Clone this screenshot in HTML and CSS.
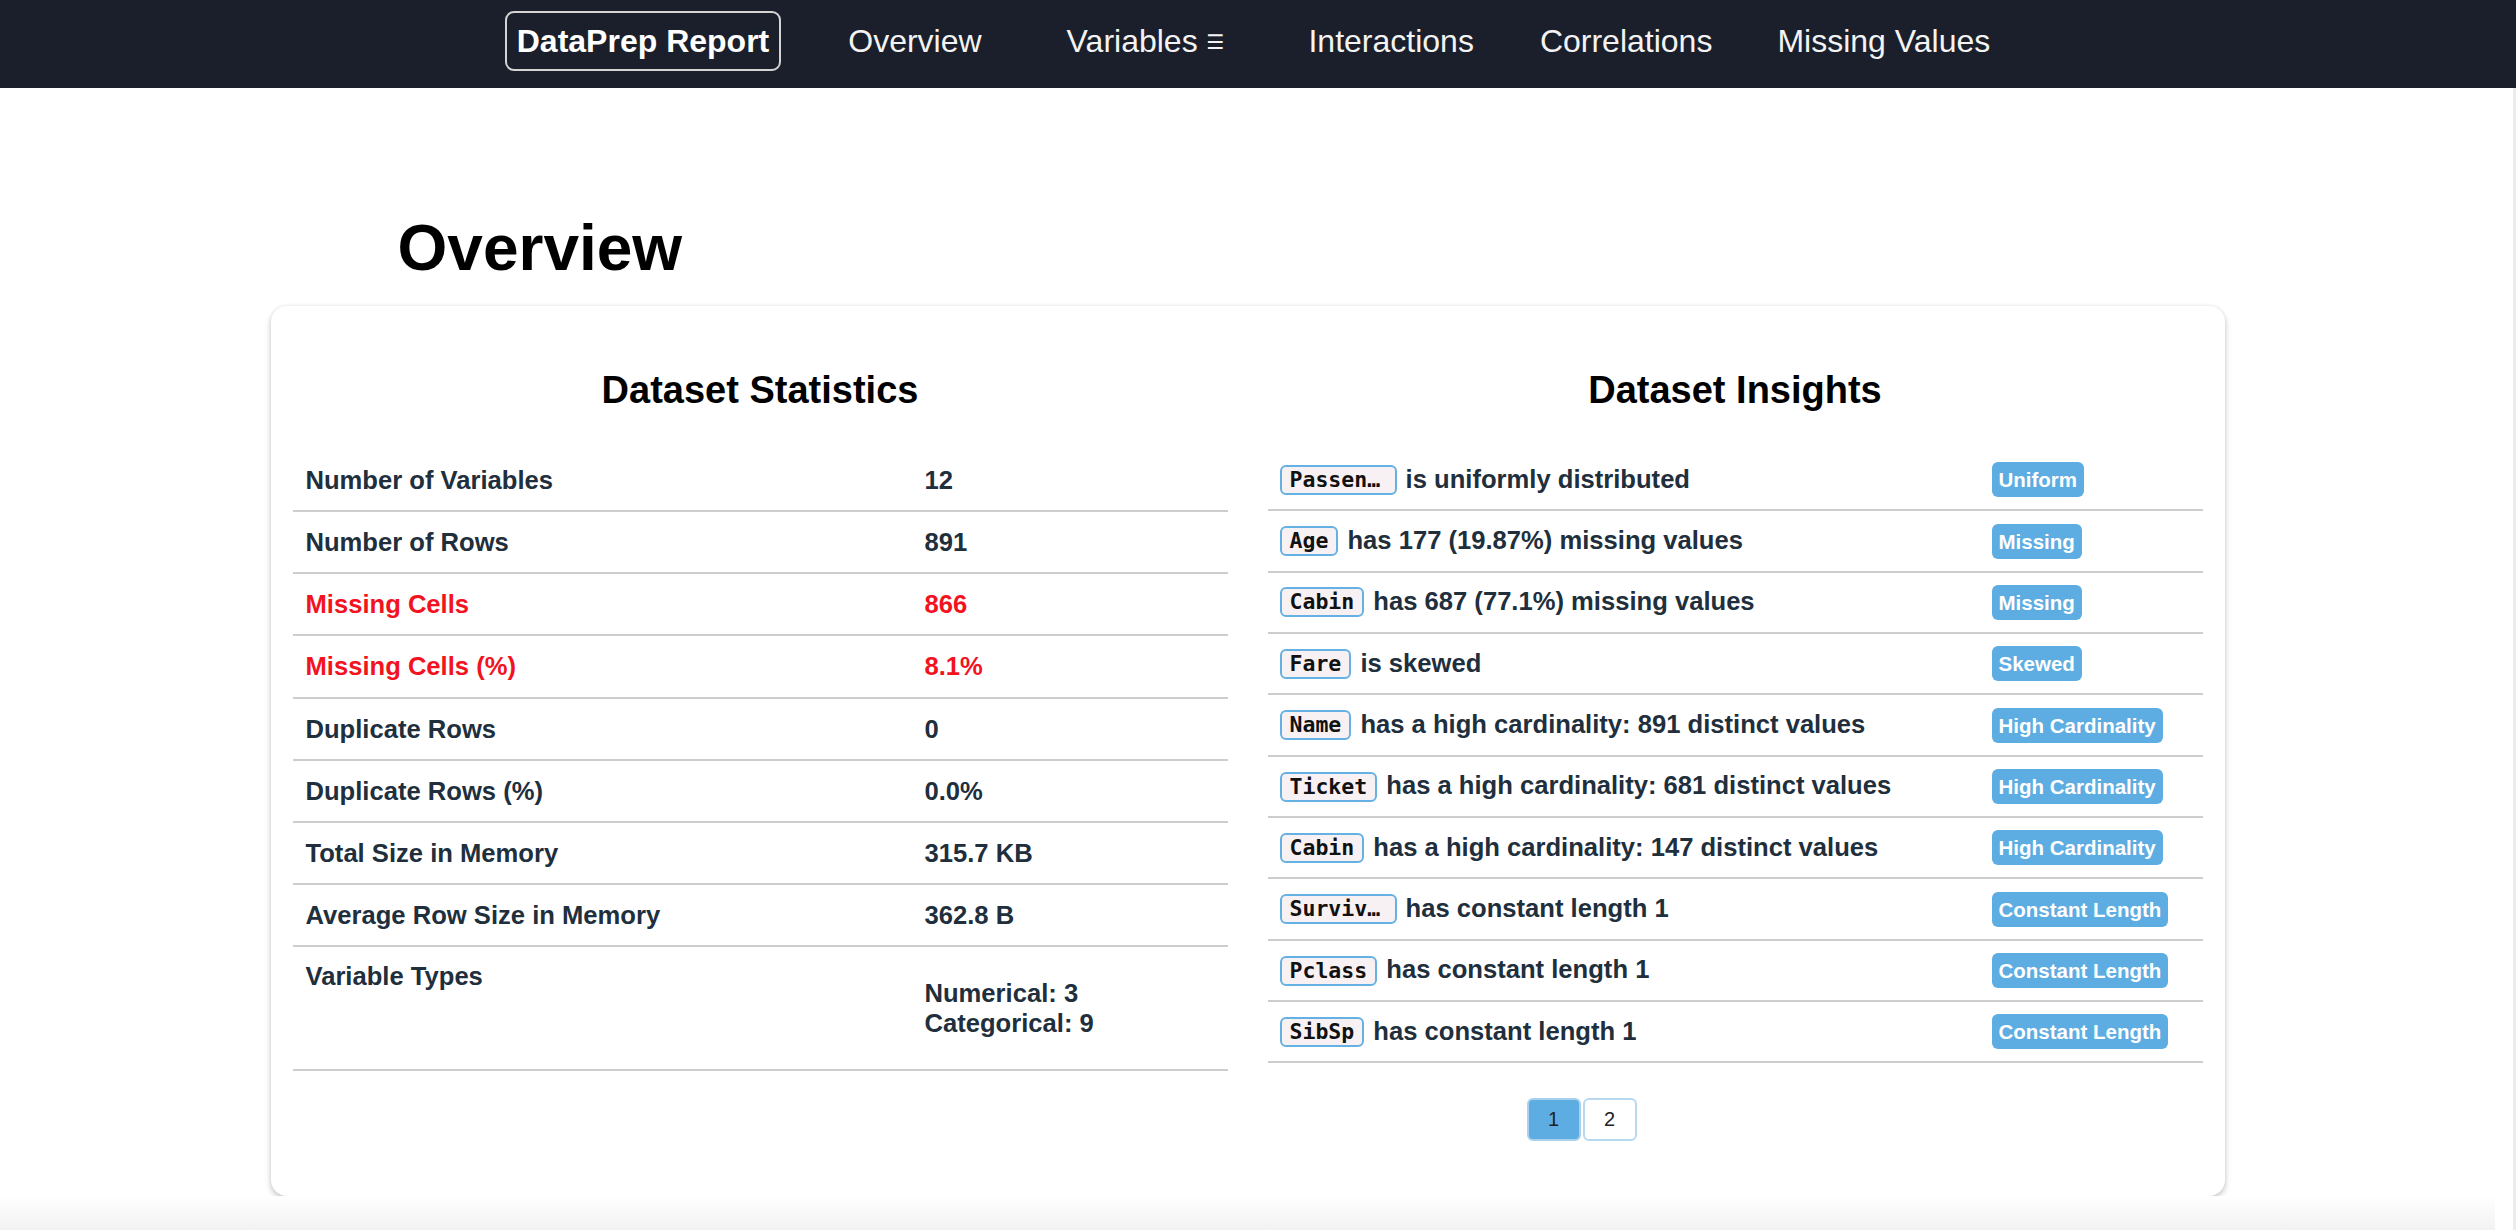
FILE: index.html
```html
<!DOCTYPE html>
<html lang="en">
<head>
<meta charset="utf-8">
<title>DataPrep Report</title>
<link rel="stylesheet" href="styles.css">
</head>
<body>
<nav class="topnav">
  <div class="nav-inner">
    <a class="brand">DataPrep Report</a>
    <a class="nav-link l-overview">Overview</a>
    <a class="nav-link l-vars">Variables <span class="menu-glyph">☰</span></a>
    <a class="nav-link l-inter">Interactions</a>
    <a class="nav-link l-corr">Correlations</a>
    <a class="nav-link l-miss">Missing Values</a>
  </div>
</nav>
<main class="page">
  <section class="overview">
    <h1 class="section-title">Overview</h1>
    <div class="card">
      <div class="col">
        <h2 class="col-title">Dataset Statistics</h2>
        <div class="stats">
          <div class="stat-row"><div class="stat-label">Number of Variables</div><div class="stat-value">12</div></div>
          <div class="stat-row"><div class="stat-label">Number of Rows</div><div class="stat-value">891</div></div>
          <div class="stat-row warn"><div class="stat-label">Missing Cells</div><div class="stat-value">866</div></div>
          <div class="stat-row warn"><div class="stat-label">Missing Cells (%)</div><div class="stat-value">8.1%</div></div>
          <div class="stat-row"><div class="stat-label">Duplicate Rows</div><div class="stat-value">0</div></div>
          <div class="stat-row"><div class="stat-label">Duplicate Rows (%)</div><div class="stat-value">0.0%</div></div>
          <div class="stat-row"><div class="stat-label">Total Size in Memory</div><div class="stat-value">315.7 KB</div></div>
          <div class="stat-row"><div class="stat-label">Average Row Size in Memory</div><div class="stat-value">362.8 B</div></div>
          <div class="stat-row types"><div class="stat-label">Variable Types</div><div class="stat-value">Numerical: 3<br>Categorical: 9</div></div>
        </div>
      </div>
      <div class="col">
        <h2 class="col-title">Dataset Insights</h2>
        <div class="insights">
          <div class="insight-row"><div class="insight-text"><code class="var trunc" title="PassengerId">Passen…</code> is uniformly distributed</div><div class="badge-cell"><span class="badge">Uniform</span></div></div>
          <div class="insight-row"><div class="insight-text"><code class="var">Age</code> has 177 (19.87%) missing values</div><div class="badge-cell"><span class="badge">Missing</span></div></div>
          <div class="insight-row"><div class="insight-text"><code class="var">Cabin</code> has 687 (77.1%) missing values</div><div class="badge-cell"><span class="badge">Missing</span></div></div>
          <div class="insight-row"><div class="insight-text"><code class="var">Fare</code> is skewed</div><div class="badge-cell"><span class="badge">Skewed</span></div></div>
          <div class="insight-row"><div class="insight-text"><code class="var">Name</code> has a high cardinality: 891 distinct values</div><div class="badge-cell"><span class="badge">High Cardinality</span></div></div>
          <div class="insight-row"><div class="insight-text"><code class="var">Ticket</code> has a high cardinality: 681 distinct values</div><div class="badge-cell"><span class="badge">High Cardinality</span></div></div>
          <div class="insight-row"><div class="insight-text"><code class="var">Cabin</code> has a high cardinality: 147 distinct values</div><div class="badge-cell"><span class="badge">High Cardinality</span></div></div>
          <div class="insight-row"><div class="insight-text"><code class="var trunc" title="Survived">Surviv…</code> has constant length 1</div><div class="badge-cell"><span class="badge">Constant Length</span></div></div>
          <div class="insight-row"><div class="insight-text"><code class="var">Pclass</code> has constant length 1</div><div class="badge-cell"><span class="badge">Constant Length</span></div></div>
          <div class="insight-row"><div class="insight-text"><code class="var">SibSp</code> has constant length 1</div><div class="badge-cell"><span class="badge">Constant Length</span></div></div>
        </div>
        <div class="pager">
          <button class="page-btn active">1</button>
          <button class="page-btn">2</button>
        </div>
      </div>
    </div>
  </section>
  <div class="fade"></div>
</main>
</body>
</html>
```
FILE: styles.css
```css
html, body {
  margin: 0;
  padding: 0;
  background: #fff;
}
body {
  font-family: "Liberation Sans", Arial, Helvetica, sans-serif;
}

/* ---------- top navigation ---------- */
.topnav {
  background: #1a1f2b;
  height: 88px;
}
.nav-inner {
  height: 82px;
  padding-right: 21px;
  display: flex;
  align-items: center;
  justify-content: center;
}
.brand {
  border: 2px solid #d4d4d4;
  border-radius: 9px;
  padding: 9px 10px;
  font-size: 32px;
  line-height: 38px;
  font-weight: 700;
  color: #fff;
}
.nav-link {
  font-size: 32px;
  line-height: 38px;
  color: #f3f3f3;
}
.l-overview { margin-left: 67px; }
.l-vars { margin-left: 85px; }
.l-inter { margin-left: 84px; }
.l-corr { margin-left: 66px; }
.l-miss { margin-left: 65px; }
.menu-glyph {
  font-family: "DejaVu Sans", sans-serif;
  font-size: 20px;
  vertical-align: 3px;
}

/* ---------- page ---------- */
.page {
  box-sizing: border-box;
  min-height: 1142px;
  padding-right: 18px;
  border-right: 3px solid #ececec;
  display: flex;
  flex-direction: column;
}
.overview {
  width: 1954px;
  margin: 0 auto;
}
.section-title {
  font-size: 64px;
  line-height: 74px;
  font-weight: 700;
  color: #000;
  margin: 123px 0 21px 127px;
}
.card {
  display: grid;
  grid-template-columns: 1fr 1fr;
  column-gap: 40px;
  padding: 22px;
  background: #fff;
  border-radius: 16px;
  box-shadow: 0 3px 6px rgba(0, 0, 0, 0.22), 0 0 4px rgba(0, 0, 0, 0.06);
}
.col {
  min-width: 0;
}
.col-title {
  font-size: 38px;
  line-height: 46px;
  font-weight: 700;
  color: #000;
  text-align: center;
  margin: 39px 0 37px;
}

/* ---------- statistics table ---------- */
.stat-row {
  display: grid;
  grid-template-columns: 619px 1fr;
  border-bottom: 2px solid #cdcdcd;
  color: #212f3d;
  font-weight: 700;
  font-size: 25.6px;
  line-height: 30px;
}
.stat-label,
.stat-value {
  padding: 15px 13px 15.15px;
}
.stat-row.warn {
  color: #f2131f;
}
.stat-row.types .stat-label {
  padding-top: 14px;
}
.stat-row.types .stat-value {
  padding-top: 31px;
  padding-bottom: 31px;
}

/* ---------- insights table ---------- */
.insight-row {
  display: grid;
  grid-template-columns: 1fr 223px;
  align-items: center;
  min-height: 59.35px;
  border-bottom: 2px solid #cdcdcd;
}
.insight-text {
  padding: 0 12px;
  font-weight: 700;
  font-size: 25.6px;
  line-height: 30px;
  color: #212f3d;
  white-space: nowrap;
}
.var {
  display: inline-block;
  vertical-align: middle;
  white-space: nowrap;
  padding: 0 8px;
  margin-right: 2px;
  position: relative;
  top: -1px;
  font-family: "DejaVu Sans Mono", "Liberation Mono", monospace;
  font-weight: 700;
  font-size: 21.5px;
  line-height: 26px;
  color: #111;
  background: #f8f1f4;
  border: 2px solid #66b1e3;
  border-radius: 6px;
}
.var.trunc {
  width: 97px;
}
.badge-cell {
  padding: 12px 0 12px 12px;
}
.badge {
  display: inline-block;
  background: #5dade2;
  color: #fff;
  font-weight: 700;
  font-size: 20.5px;
  line-height: 35px;
  padding: 0 7px;
  border-radius: 6px;
  vertical-align: top;
}

/* ---------- pager ---------- */
.pager {
  display: flex;
  gap: 2px;
  margin: 35px 0 33px 259px;
}
.page-btn {
  width: 54px;
  height: 43px;
  padding: 0;
  border: 2px solid #b6d9f0;
  border-radius: 6px;
  background: #fff;
  color: #222;
  font-family: "Liberation Sans", Arial, sans-serif;
  font-size: 20px;
}
.page-btn.active {
  background: #5dade2;
  border-color: #a8d1ee;
}

/* ---------- bottom fade ---------- */
.fade {
  flex: 1;
  min-height: 30px;
  background: linear-gradient(to bottom, #ffffff, #f2f2f2);
}
```
